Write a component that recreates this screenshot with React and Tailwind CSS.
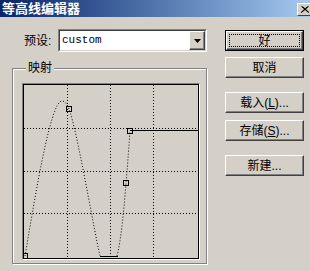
import React from 'react'

const font = "font-['Liberation_Sans','Noto_Sans_CJK_SC',sans-serif]"

function Btn({ children, primary, className = '' }) {
  if (primary) {
    return (
      <div className={`h-[21px] border border-black ${className}`}>
        <div className="h-full border border-t-white border-l-white border-b-[#404040] border-r-[#404040] shadow-[inset_-1px_-1px_0_#808080] p-[2px]">
          <div className="h-full border border-dotted border-black flex items-center justify-center text-[12px] leading-none">
            {children}
          </div>
        </div>
      </div>
    )
  }
  return (
    <div className={`h-[21px] border border-t-white border-l-white border-b-[#404040] border-r-[#404040] shadow-[inset_-1px_-1px_0_#808080] flex items-center justify-center text-[12px] leading-none ${className}`}>
      {children}
    </div>
  )
}

function Curve() {
  const grid = 'stroke-black'
  return (
    <svg width="174" height="173" viewBox="24 85 174 173" className="block">
      {[67.5, 110.5, 153.5].map((x) => (
        <line key={'v' + x} x1={x} y1="85" x2={x} y2="258" className={grid} strokeWidth="1" strokeDasharray="1 2" />
      ))}
      {[128.5, 171.5, 213.5].map((y) => (
        <line key={'h' + y} x1="24" y1={y} x2="198" y2={y} className={grid} strokeWidth="1" strokeDasharray="1 2" />
      ))}
      <path
        d="M25,256 C33,210 50,100 62,101 C65,101 67,104 69,109 C77,130 92,220 100,256 M117,256 C121,240 124,210 126,183 C128,160 129,145 130,131"
        fill="none"
        stroke="#000"
        strokeWidth="1"
        strokeDasharray="1 2"
      />
      <line x1="100" y1="256.5" x2="118" y2="256.5" stroke="#000" strokeWidth="1" />
      <line x1="130" y1="130.5" x2="198" y2="130.5" stroke="#000" strokeWidth="1" />
      {[[69, 109], [130, 131], [126, 183], [25, 256]].map(([x, y]) => (
        <rect key={x + '-' + y} x={x - 2.5} y={y - 2.5} width="5" height="5" fill="none" stroke="#000" strokeWidth="1" />
      ))}
    </svg>
  )
}

export default function App() {
  return (
    <div className={`w-[310px] h-[271px] bg-[#d4d0c8] overflow-hidden ${font}`}>
      <div className="h-[17px] bg-linear-to-r from-[#0a246a] to-[#a6caf0] flex items-center">
        <span className="pl-[2px] text-white font-bold text-[13px] leading-[17px]">等高线编辑器</span>
        <div className="ml-auto mr-[-2px] mt-[1px] w-[15px] h-[13px] bg-[#d4d0c8] border border-t-white border-l-white border-b-[#404040] border-r-[#404040] flex items-center justify-center">
          <svg width="8" height="7" viewBox="0 0 8 7">
            <path d="M0.5,0.5 L7.5,6.5 M7.5,0.5 L0.5,6.5 M1.5,0.5 L8,6.5 M6.5,0.5 L0,6.5" stroke="#000" strokeWidth="1" />
          </svg>
        </div>
      </div>

      <div className="flex pl-[12px] pt-[12px]">
        <div className="w-[195px]">
          <div className="flex items-center h-[23px]">
            <span className="w-[46px] pl-[12px] text-[12px] leading-none">预设:</span>
            <div className="w-[149px] h-[23px] border border-t-[#808080] border-l-[#808080] border-b-white border-r-white">
              <div className="h-full border border-t-[#404040] border-l-[#404040] border-b-[#d4d0c8] border-r-[#d4d0c8] bg-white flex items-center">
                <span className="pl-[2px] text-[11px] font-['Liberation_Mono',monospace]">custom</span>
                <div className="ml-auto w-[16px] h-full bg-[#d4d0c8] border border-t-white border-l-white border-b-[#404040] border-r-[#404040] shadow-[inset_-1px_-1px_0_#808080] flex items-center justify-center">
                  <svg width="7" height="4" viewBox="0 0 7 4">
                    <path d="M0,0 H7 L3.5,4 Z" fill="#000" />
                  </svg>
                </div>
              </div>
            </div>
          </div>

          <div className="relative mt-[16px] h-[196px] border border-[#808080] shadow-[inset_1px_1px_0_#fff,1px_1px_0_#fff]">
            <span className="absolute -top-[8px] left-[13px] px-[2px] bg-[#d4d0c8] text-[12px] leading-[14px]">映射</span>
            <div className="ml-[9px] mt-[14px] w-[178px] h-[177px] border border-t-[#808080] border-l-[#808080] border-b-white border-r-white">
              <div className="w-full h-full border border-black">
                <Curve />
              </div>
            </div>
          </div>
        </div>

        <div className="ml-[18px] w-[79px] flex flex-col">
          <Btn primary className="mt-[1px]">好</Btn>
          <Btn className="mt-[6px]">取消</Btn>
          <Btn className="mt-[14px]">载入(<u>L</u>)...</Btn>
          <Btn className="mt-[7px]">存储(<u>S</u>)...</Btn>
          <Btn className="mt-[14px]">新建...</Btn>
        </div>
      </div>
    </div>
  )
}
